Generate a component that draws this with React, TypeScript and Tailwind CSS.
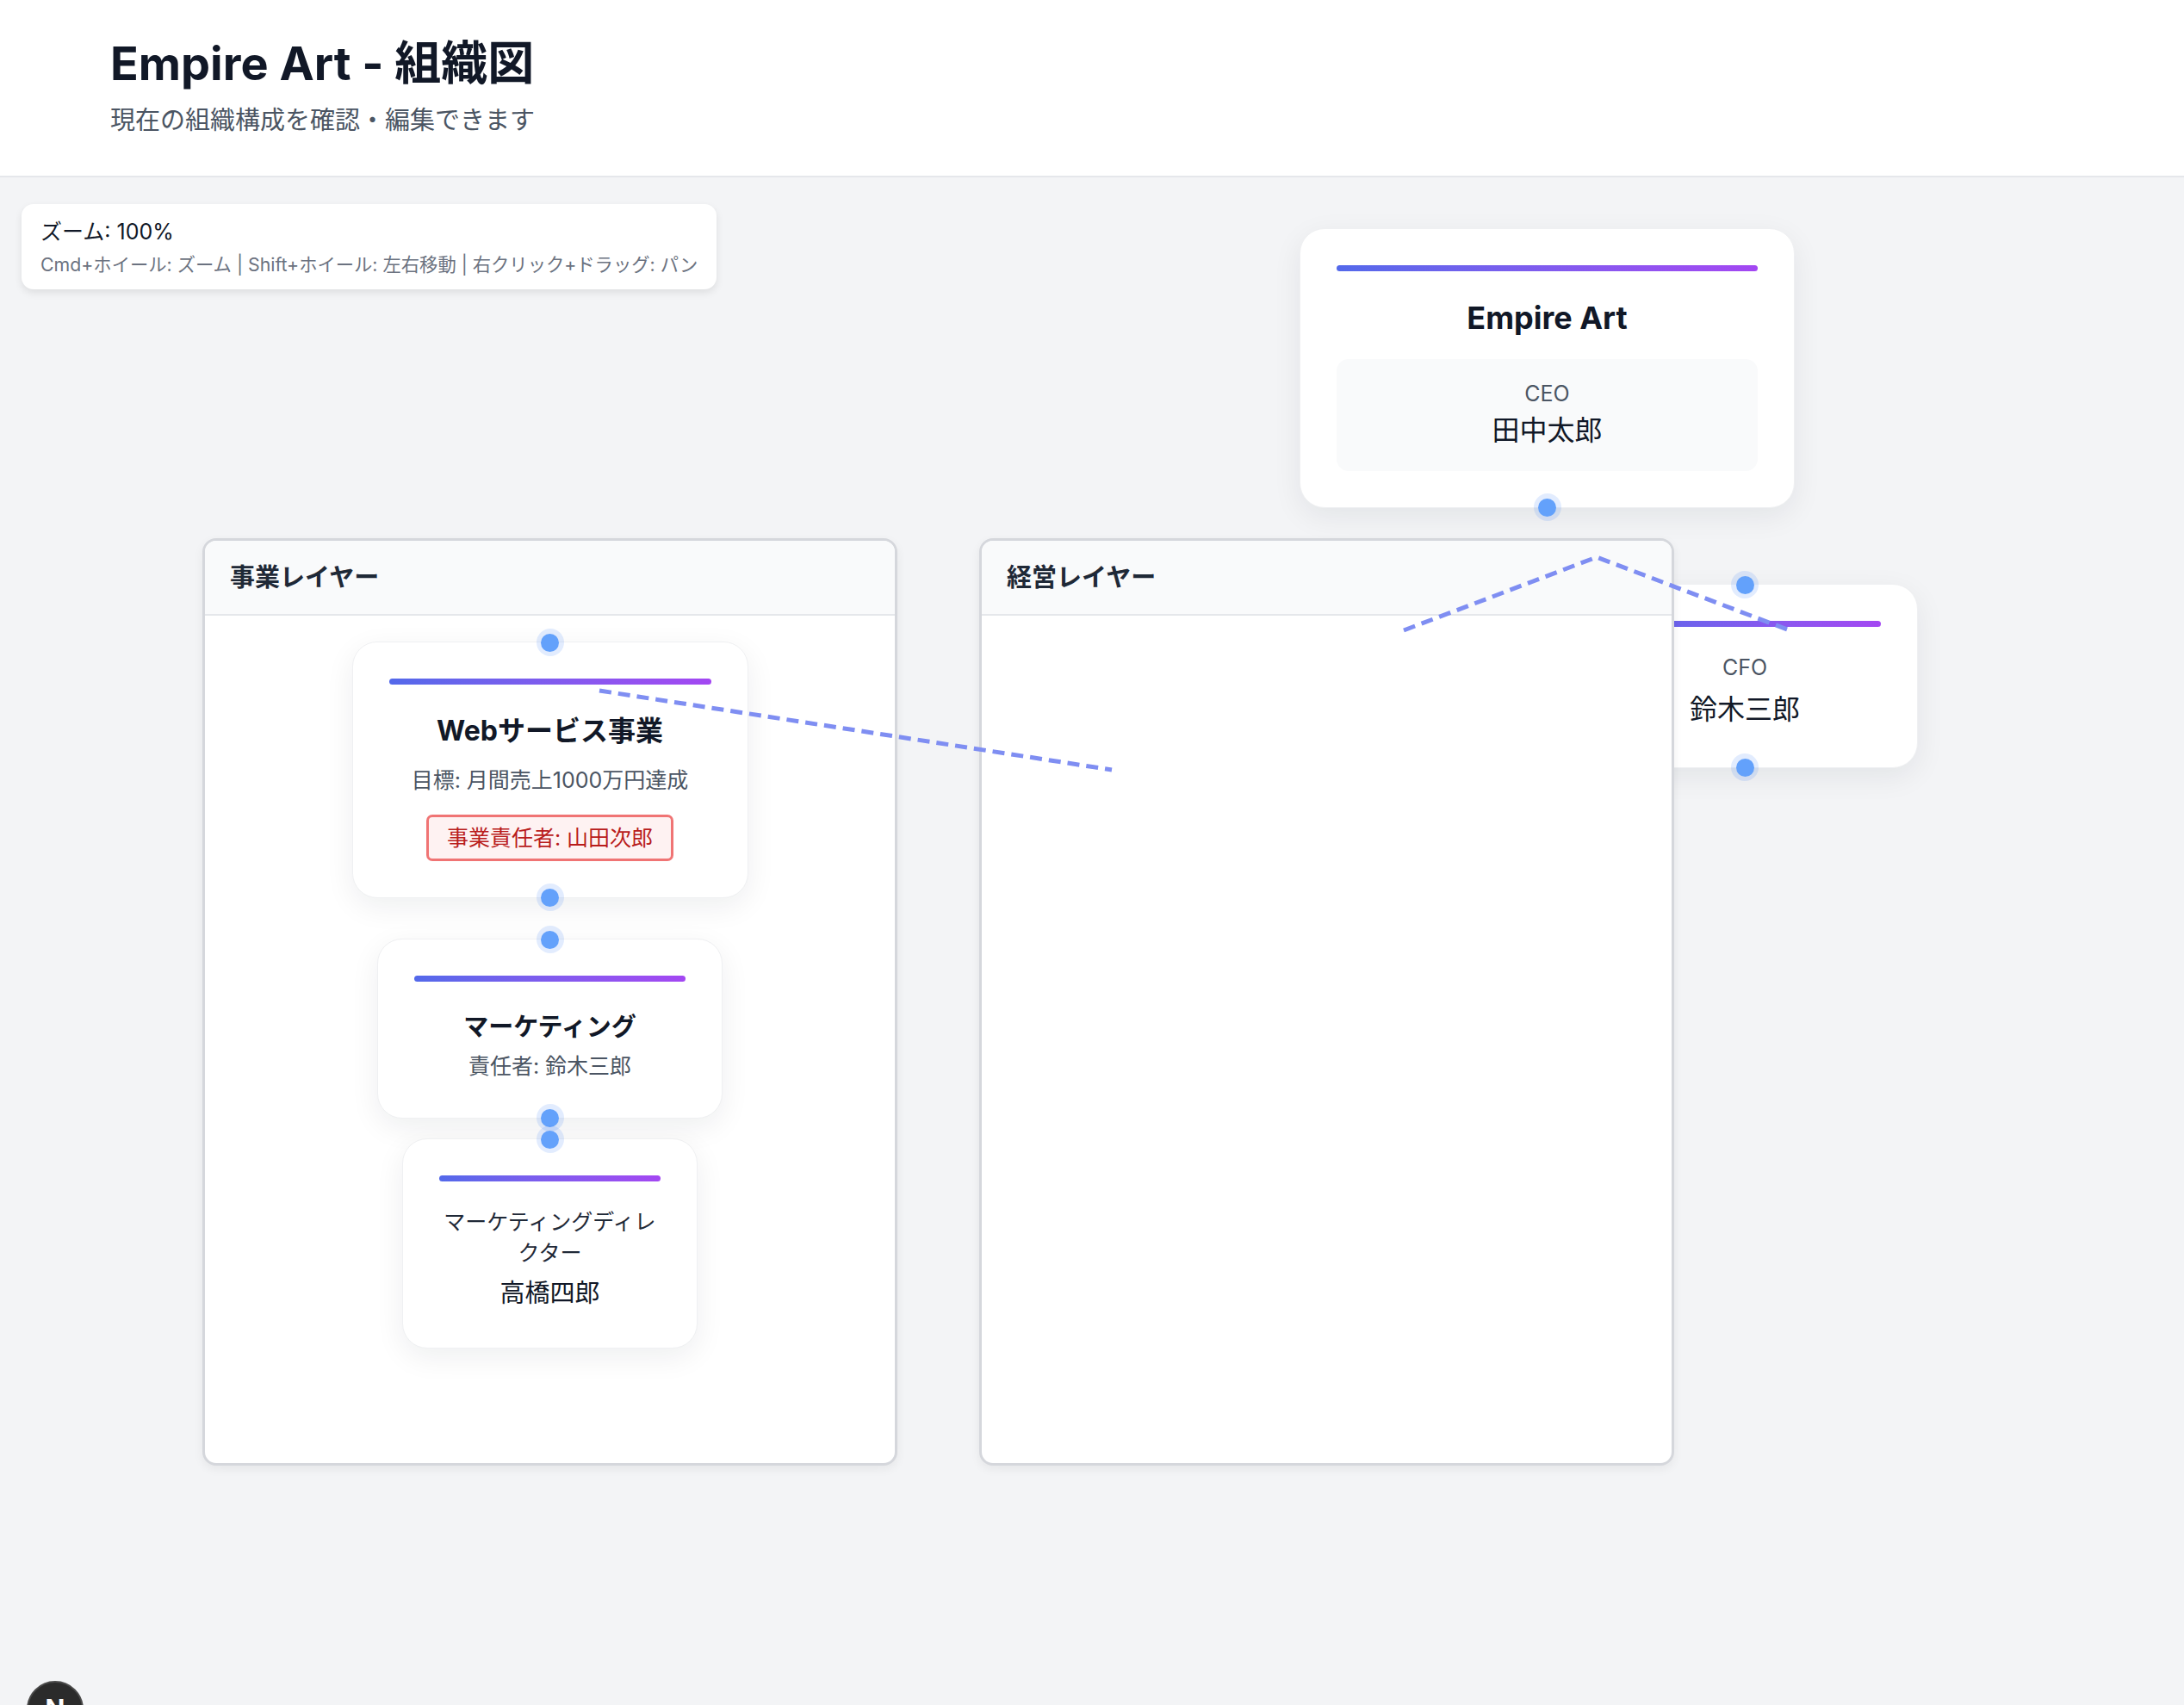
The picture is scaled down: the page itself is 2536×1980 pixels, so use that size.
import React from 'react';

const Handle = ({ className }: { className: string }) => (
    <div
        className={`absolute left-1/2 -translate-x-1/2 w-[32px] h-[32px] rounded-full bg-[#3b82f6]/15 flex items-center justify-center z-10 ${className}`}
    >
        <div className="w-[21px] h-[21px] rounded-full bg-[#63a1fb]" />
    </div>
);

const Bar = () => (
    <div className="h-[7px] rounded-full bg-linear-to-r from-[#5369ea] to-[#a347f2] mb-[29px]" />
);

interface CardProps {
    className: string;
    top?: boolean;
    bottom?: boolean;
    children: React.ReactNode;
}

// className carries the position (relative or absolute + offsets)
const Card: React.FC<CardProps> = ({ className, top, bottom, children }) => (
    <div
        className={`bg-white rounded-[29px] border border-[#eff0f2] shadow-[0_10px_34px_rgba(17,24,39,0.07)] p-[42px] text-center ${className}`}
    >
        {top && <Handle className="top-[-16px]" />}
        <Bar />
        {children}
        {bottom && <Handle className="bottom-[-16px]" />}
    </div>
);

const Group = ({ title, className, children }: { title: string; className: string; children?: React.ReactNode }) => (
    <div
        className={`absolute top-[419px] w-[807px] h-[1077px] bg-white border-[3px] border-[#d5d7dc] rounded-[16px] shadow-[0_4px_12px_rgba(0,0,0,0.06)] overflow-hidden flex flex-col ${className}`}
    >
        <div className="bg-[#f9fafb] border-b-2 border-[#e5e7eb] px-[29px] py-[21px]">
            <h2 className="text-[29px] leading-[43px] font-bold text-[#1f2937]">{title}</h2>
        </div>
        <div className="flex-1 flex flex-col items-center pt-[30px]">{children}</div>
    </div>
);

export default function App() {
    return (
        <div className="relative h-[1980px] overflow-hidden bg-[#f3f4f6] flex flex-col font-['Inter','Noto_Sans_CJK_JP',sans-serif]">
            <header className="bg-white border-b-2 border-[#e5e7eb] pl-[128px] pt-[41px] pb-[43px]">
                <h1 className="text-[54px] leading-[65px] font-bold text-[#111827]">Empire Art - 組織図</h1>
                <p className="mt-[12px] text-[29px] leading-[43px] text-[#4b5563]">現在の組織構成を確認・編集できます</p>
            </header>

            <main className="relative flex-1">
                {/* zoom hint */}
                <div className="absolute left-[25px] top-[31px] bg-white rounded-[14px] shadow-[0_4px_10px_rgba(0,0,0,0.09)] px-[22px] py-[14px]">
                    <p className="text-[25px] leading-[36px] text-[#111827]">ズーム: 100%</p>
                    <p className="mt-[6px] text-[21.3px] leading-[29px] text-[#6b7280]">
                        Cmd+ホイール: ズーム | Shift+ホイール: 左右移動 | 右クリック+ドラッグ: パン
                    </p>
                </div>

                {/* CFO sits under the 経営 layer */}
                <Card className="absolute left-[1825px] top-[472px] w-[402px]" top bottom>
                    <p className="text-[25px] leading-[36px] text-[#4b5563]">CFO</p>
                    <p className="mt-[6px] text-[32px] leading-[50px] text-[#111827]">鈴木三郎</p>
                </Card>

                <Group title="事業レイヤー" className="left-[235px]">
                    <Card className="relative w-[460px]" top bottom>
                        <h3 className="text-[32px] leading-[50px] font-bold text-[#111827]">Webサービス事業</h3>
                        <p className="mt-[14px] text-[25px] leading-[36px] text-[#4b5563]">目標: 月間売上1000万円達成</p>
                        <div className="mt-[22px] inline-block border-[3px] border-[#f07474] bg-[#fef2f2] rounded-[7px] px-[21px] py-[6px] text-[25px] leading-[36px] text-[#b91c1c]">
                            事業責任者: 山田次郎
                        </div>
                    </Card>

                    <Card className="relative mt-[47px] w-[401px]" top bottom>
                        <h3 className="pt-[2px] text-[29px] leading-[43px] font-bold text-[#111827]">マーケティング</h3>
                        <p className="mt-[6px] text-[25px] leading-[36px] text-[#4b5563]">責任者: 鈴木三郎</p>
                    </Card>

                    <Card className="relative mt-[23px] w-[343px]" top>
                        <p className="text-[25px] leading-[36px] text-[#1f2937]">マーケティングディレクター</p>
                        <p className="mt-[7px] text-[29px] leading-[43px] text-[#111827]">高橋四郎</p>
                    </Card>
                </Group>

                <Group title="経営レイヤー" className="left-[1137px]" />

                <Card className="absolute left-[1509px] top-[59px] w-[575px]" bottom>
                    <h3 className="text-[36px] leading-[50px] font-bold text-[#111827] mb-[23px]">Empire Art</h3>
                    <div className="bg-[#f9fafb] rounded-[14px] p-[22px]">
                        <p className="text-[25px] leading-[36px] text-[#4b5563]">CEO</p>
                        <p className="text-[32px] leading-[50px] text-[#111827]">田中太郎</p>
                    </div>
                </Card>

                {/* edges */}
                <svg className="absolute inset-0 w-full h-full pointer-events-none z-20" fill="none">
                    <polyline
                        points="696,596 1291,688"
                        stroke="#7f8ef2"
                        strokeWidth="5"
                        strokeDasharray="14 8"
                    />
                    <polyline
                        points="1630,526 1854,441 2078,526"
                        stroke="#7f8ef2"
                        strokeWidth="5"
                        strokeDasharray="14 8"
                    />
                </svg>
            </main>

            {/* dev badge */}
            <div className="absolute left-[31px] top-[1952px] w-[66px] h-[66px] rounded-full bg-[#2b2b2b] border-2 border-[#4a4a4a] flex justify-center pt-[12px] text-white font-bold text-[30px] leading-[36px] z-30">
                N
            </div>
        </div>
    );
}
